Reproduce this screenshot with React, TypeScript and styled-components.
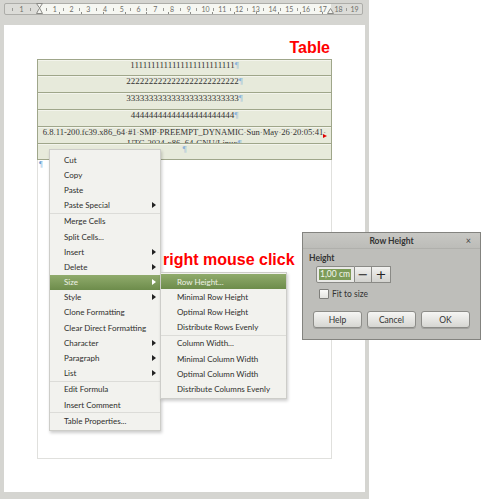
import React from 'react';
import styled, { createGlobalStyle } from 'styled-components';

const UI_FONT = `Lato, "Noto Sans", "Liberation Sans", sans-serif`;

const GlobalStyle = createGlobalStyle`
  html, body { margin: 0; padding: 0; background: #fff; }
  body { font-family: ${UI_FONT}; }
`;

type Item = { label: string; sub?: boolean; active?: boolean; sep?: boolean };

const contextItems: Item[] = [
  { label: 'Cut' },
  { label: 'Copy' },
  { label: 'Paste' },
  { label: 'Paste Special', sub: true, sep: true },
  { label: 'Merge Cells' },
  { label: 'Split Cells...' },
  { label: 'Insert', sub: true },
  { label: 'Delete', sub: true },
  { label: 'Size', sub: true, active: true },
  { label: 'Style', sub: true },
  { label: 'Clone Formatting' },
  { label: 'Clear Direct Formatting' },
  { label: 'Character', sub: true },
  { label: 'Paragraph', sub: true },
  { label: 'List', sub: true, sep: true },
  { label: 'Edit Formula' },
  { label: 'Insert Comment', sep: true },
  { label: 'Table Properties...' },
];

const sizeItems: Item[] = [
  { label: 'Row Height...', active: true },
  { label: 'Minimal Row Height' },
  { label: 'Optimal Row Height' },
  { label: 'Distribute Rows Evenly', sep: true },
  { label: 'Column Width...' },
  { label: 'Minimal Column Width' },
  { label: 'Optimal Column Width' },
  { label: 'Distribute Columns Evenly' },
];

const rows = [
  { text: '1'.repeat(25), h: 16 },
  { text: '2'.repeat(25), h: 17 },
  { text: '3'.repeat(25), h: 17 },
  { text: '4'.repeat(23), h: 17 },
];

const Menu: React.FC<{ items: Item[]; indent: number; className?: string }> = ({
  items,
  indent,
  className,
}) => (
  <div className={className}>
    {items.map((item) => (
      <React.Fragment key={item.label}>
        <S.MenuItem $active={item.active} $indent={indent}>
          {item.label}
          {item.sub && <S.Arrow $active={item.active} />}
        </S.MenuItem>
        {item.sep && <S.Separator />}
      </React.Fragment>
    ))}
  </div>
);

const Dot = () => <S.Mark>·</S.Mark>;

export default function App() {
  const cells = Array.from({ length: 17 }, (_, i) => i + 1);
  return (
    <S.Screen>
      <GlobalStyle />
      <S.Workspace>
        <S.Ruler>
          <S.RulerMargin $width={33}>
            <S.Tick />
            <span>1</span>
            <S.Tick />
          </S.RulerMargin>
          <S.RulerBody>
            {cells.map((n) => (
              <S.RulerCell key={n}>
                <S.Tick />
                <S.RulerNum>{n}</S.RulerNum>
              </S.RulerCell>
            ))}
            <S.IndentLeft width="7" height="11" viewBox="0 0 7 11">
              <path d="M0.5 0.5h6L3.5 5 6.5 10.5h-6L3.5 5z" fill="#f4f4f0" stroke="#8a8a86" />
            </S.IndentLeft>
            <S.IndentRight width="7" height="6" viewBox="0 0 7 6">
              <path d="M3.5 0.5L6.5 5.5h-6z" fill="#f4f4f0" stroke="#8a8a86" />
            </S.IndentRight>
          </S.RulerBody>
          <S.RulerMargin $width={31}>
            <span>18</span>
            <S.Tick />
            <span>19</span>
          </S.RulerMargin>
        </S.Ruler>

        <S.Page>
          <S.Caption>Table</S.Caption>
          <S.ContentArea>
            <S.Table>
              {rows.map((r) => (
                <S.Row key={r.text} $h={r.h}>
                  <span>
                    {r.text}
                    <S.Pilcrow>¶</S.Pilcrow>
                  </span>
                </S.Row>
              ))}
              <S.Row $h={17} $size={8.6}>
                <span>
                  6.8.11-200.fc39.x86_64<Dot />#1<Dot />SMP<Dot />PREEMPT_DYNAMIC<Dot />Sun
                  <Dot />May<Dot />26<Dot />20:05:41<Dot />
                  <br />
                  UTC<Dot />2024<Dot />x86_64<Dot />GNU/Linux<S.Pilcrow>¶</S.Pilcrow>
                </span>
                <S.Overflow />
              </S.Row>
              <S.Row $h={16}>
                <S.Pilcrow>¶</S.Pilcrow>
              </S.Row>
            </S.Table>
            <S.AfterTable>¶</S.AfterTable>
          </S.ContentArea>

          <S.ContextMenu items={contextItems} indent={14} />
          <S.Annotation>right mouse click</S.Annotation>
          <S.SubMenu items={sizeItems} indent={16} />
        </S.Page>
      </S.Workspace>

      <S.Dialog>
        <S.TitleBar>
          <span />
          <S.Title>Row Height</S.Title>
          <S.Close>×</S.Close>
        </S.TitleBar>
        <S.DialogBody>
          <S.FieldLabel>Height</S.FieldLabel>
          <S.SpinRow>
            <S.SpinInput>
              <S.Selected>1,00 cm</S.Selected>
            </S.SpinInput>
            <S.SpinButton $width={17}>−</S.SpinButton>
            <S.SpinButton $width={19}>+</S.SpinButton>
          </S.SpinRow>
          <S.CheckRow>
            <S.CheckBox />
            Fit to size
          </S.CheckRow>
          <S.ButtonRow>
            <S.Button $width={49}>Help</S.Button>
            <S.Button $width={49}>Cancel</S.Button>
            <S.Button $width={49}>OK</S.Button>
          </S.ButtonRow>
        </S.DialogBody>
      </S.Dialog>
    </S.Screen>
  );
}

const S = {
  Screen: styled.div`
    position: relative;
    width: 487px;
    height: 499px;
    display: flex;
    overflow: hidden;
    background: #fff;
  `,
  Workspace: styled.div`
    width: 369px;
    height: 100%;
    box-sizing: border-box;
    padding: 3px 0 0 4px;
    background: #d5d5d1;
    display: flex;
    flex-direction: column;
  `,
  Ruler: styled.div`
    width: 359px;
    height: 12px;
    box-sizing: border-box;
    border: 1px solid #adada9;
    border-radius: 2px;
    background: #dcdcd8;
    display: flex;
    font-size: 7px;
    line-height: 1;
    color: #6e6e6a;
  `,
  RulerMargin: styled.div<{ $width: number }>`
    width: ${(p) => p.$width}px;
    flex: none;
    display: flex;
    align-items: center;
    justify-content: space-evenly;
  `,
  RulerBody: styled.div`
    position: relative;
    width: 293px;
    flex: none;
    display: flex;
    background: #f6f7f2;
    &::after {
      content: '';
      position: absolute;
      left: 0;
      right: 0;
      bottom: 0;
      height: 2px;
      background: repeating-linear-gradient(
        to right,
        transparent 0 20.9px,
        #8c8c88 20.9px 21.9px
      );
    }
  `,
  RulerCell: styled.div`
    width: 16.75px;
    flex: none;
    display: grid;
    grid-template-columns: 1fr auto 1fr;
    align-items: center;
  `,
  Tick: styled.i`
    grid-column: 2;
    display: block;
    width: 1px;
    height: 3px;
    background: #9a9a96;
  `,
  RulerNum: styled.span`
    grid-column: 3;
    justify-self: end;
    transform: translateX(50%);
  `,
  IndentLeft: styled.svg`
    position: absolute;
    left: -2px;
    top: -1px;
  `,
  IndentRight: styled.svg`
    position: absolute;
    left: 289px;
    bottom: 0;
  `,
  Page: styled.div`
    position: relative;
    margin-top: 10px;
    width: 361px;
    height: 467px;
    box-sizing: border-box;
    padding: 0 33px;
    background: #fff;
  `,
  Caption: styled.div`
    height: 34px;
    box-sizing: border-box;
    padding: 0 2px 3px 0;
    display: flex;
    justify-content: flex-end;
    align-items: flex-end;
    font: bold 16px/16px 'Liberation Sans', Arial, sans-serif;
    color: #ff0000;
  `,
  ContentArea: styled.div`
    height: 400px;
    box-sizing: border-box;
    border: 1px solid #e0e0dd;
    border-top: none;
  `,
  Table: styled.div`
    margin: 0 -1px;
    display: flex;
    flex-direction: column;
    border: 1px solid #9fa68a;
    border-bottom: none;
    background: #e7eadb;
  `,
  Row: styled.div<{ $h: number; $size?: number }>`
    position: relative;
    height: ${(p) => p.$h}px;
    box-sizing: border-box;
    border-bottom: 1px solid #9fa68a;
    box-shadow: inset 0 1px 0 #f3f4ec;
    overflow: hidden;
    text-align: center;
    white-space: nowrap;
    font-family: 'Liberation Serif', 'Times New Roman', serif;
    font-size: ${(p) => p.$size ?? 9}px;
    line-height: 11px;
    color: #333;
  `,
  Mark: styled.span`
    color: #777;
  `,
  Pilcrow: styled.span`
    color: #8db4d9;
  `,
  Overflow: styled.i`
    position: absolute;
    right: 4px;
    top: 7px;
    width: 0;
    height: 0;
    border-left: 4px solid #e00000;
    border-top: 2.5px solid transparent;
    border-bottom: 2.5px solid transparent;
  `,
  AfterTable: styled.div`
    padding-left: 1px;
    font: 8px/9px 'Liberation Serif', serif;
    color: #6fa3d6;
  `,
  ContextMenu: styled(Menu)`
    position: absolute;
    left: 45px;
    top: 124px;
    width: 112px;
    box-sizing: border-box;
    padding: 2px 0;
    background: #f2f2ee;
    border: 1px solid #cdcdc9;
    box-shadow: 1px 2px 3px rgba(0, 0, 0, 0.2);
  `,
  SubMenu: styled(Menu)`
    position: absolute;
    left: 156px;
    top: 247px;
    width: 127px;
    box-sizing: border-box;
    padding: 1px 0;
    background: #f2f2ee;
    border: 1px solid #cdcdc9;
    box-shadow: 1px 2px 3px rgba(0, 0, 0, 0.2);
  `,
  MenuItem: styled.div<{ $active?: boolean; $indent: number }>`
    height: 15.2px;
    display: flex;
    align-items: center;
    padding: 0 4px 0 ${(p) => p.$indent}px;
    font-size: 8px;
    white-space: nowrap;
    color: ${(p) => (p.$active ? '#eef2e6' : '#2e2e2c')};
    background: ${(p) => (p.$active ? 'linear-gradient(#90ab6c, #6d8c4b)' : 'transparent')};
  `,
  Arrow: styled.i<{ $active?: boolean }>`
    margin-left: auto;
    width: 0;
    height: 0;
    border-left: 4px solid ${(p) => (p.$active ? '#fff' : '#222')};
    border-top: 3px solid transparent;
    border-bottom: 3px solid transparent;
  `,
  Separator: styled.div`
    height: 1px;
    background: #dcdcd8;
  `,
  Annotation: styled.div`
    position: absolute;
    left: 159px;
    top: 226px;
    font: bold 16px/18px 'Liberation Sans', Arial, sans-serif;
    color: #ff0000;
    white-space: nowrap;
  `,
  Dialog: styled.div`
    position: absolute;
    left: 302px;
    top: 232px;
    width: 179px;
    height: 108px;
    box-sizing: border-box;
    border: 1px solid #83837f;
    background: #bebeba;
    font-size: 8.5px;
    color: #333;
  `,
  TitleBar: styled.div`
    height: 15px;
    display: grid;
    grid-template-columns: 1fr auto 1fr;
    align-items: center;
    background: linear-gradient(#c8c8c4, #bcbcb8);
    border-bottom: 1px solid #b0b0ac;
  `,
  Title: styled.span`
    font-weight: bold;
  `,
  Close: styled.span`
    justify-self: end;
    padding-right: 9px;
    font-size: 9px;
    color: #444;
  `,
  DialogBody: styled.div`
    padding: 3px 0 0 6px;
  `,
  FieldLabel: styled.div`
    height: 12px;
    line-height: 12px;
    font-weight: bold;
  `,
  SpinRow: styled.div`
    display: flex;
    height: 17px;
    margin: 2px 0 0 7px;
  `,
  SpinInput: styled.div`
    width: 39px;
    box-sizing: border-box;
    display: flex;
    align-items: center;
    padding-left: 2px;
    background: #e9e9e6;
    border: 1px solid #8a8a86;
    border-radius: 2px 0 0 2px;
  `,
  Selected: styled.span`
    padding: 0 1px;
    line-height: 11px;
    background: #7c9b58;
    color: #f4f6ef;
  `,
  SpinButton: styled.div<{ $width: number }>`
    width: ${(p) => p.$width}px;
    box-sizing: border-box;
    display: flex;
    align-items: center;
    justify-content: center;
    border: 1px solid #8a8a86;
    border-left: none;
    background: linear-gradient(#f2f2f0, #d2d2ce);
    font: 13px/1 'DejaVu Sans', sans-serif;
    color: #222;
  `,
  CheckRow: styled.div`
    display: flex;
    align-items: center;
    gap: 3px;
    height: 11px;
    margin: 5px 0 0 10px;
  `,
  CheckBox: styled.i`
    width: 10px;
    height: 10px;
    box-sizing: border-box;
    border: 1px solid #7f7f7b;
    border-radius: 1px;
    background: linear-gradient(#fafaf8, #e4e4e0);
  `,
  ButtonRow: styled.div`
    display: flex;
    gap: 5px;
    margin: 12px 0 0 4px;
  `,
  Button: styled.div<{ $width: number }>`
    width: ${(p) => p.$width}px;
    height: 17px;
    box-sizing: border-box;
    display: flex;
    align-items: center;
    justify-content: center;
    border: 1px solid #8c8c88;
    border-radius: 3px;
    background: linear-gradient(#f6f6f4, #d6d6d2);
    box-shadow: 0 1px 0 rgba(0, 0, 0, 0.15);
  `,
};
